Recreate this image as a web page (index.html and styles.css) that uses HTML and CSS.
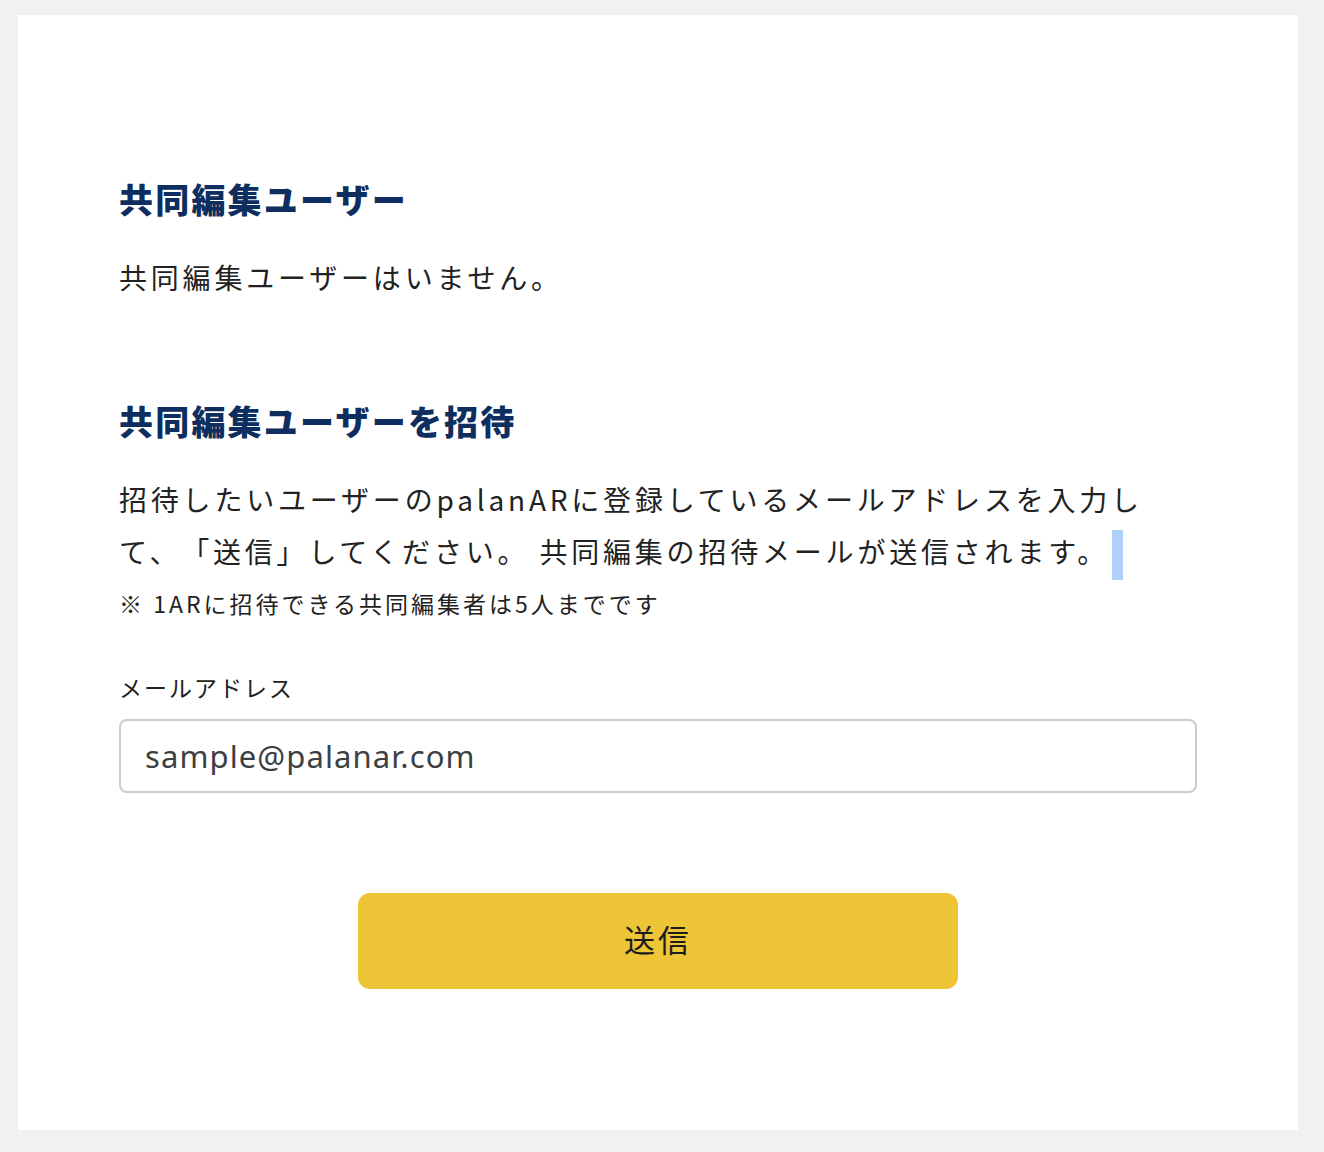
FILE: index.html
```html
<!DOCTYPE html>
<html lang="ja">
<head>
<meta charset="utf-8">
<title>共同編集ユーザー</title>
<link rel="stylesheet" href="styles.css">
</head>
<body>
<div class="page">
  <main class="card">
    <section class="block">
      <h2 class="title">共同編集ユーザー</h2>
      <p class="text">共同編集ユーザーはいません。</p>
    </section>
    <section class="block invite">
      <h2 class="title">共同編集ユーザーを招待</h2>
      <p class="text lead">招待したいユーザーのpalanARに登録しているメールアドレスを入力して、「送信」してください。 共同編集の招待メールが送信されます。<span class="sel"></span></p>
      <p class="note">※ 1ARに招待できる共同編集者は5人までです</p>
      <form class="form">
        <label class="label" for="email">メールアドレス</label>
        <input class="input" id="email" type="email" placeholder="sample@palanar.com">
        <div class="actions">
          <button class="btn" type="button">送信</button>
        </div>
      </form>
    </section>
  </main>
</div>
</body>
</html>
```
FILE: styles.css
```css
html, body {
  margin: 0;
  padding: 0;
  background: #f1f1f1;
}
body {
  font-family: "Noto Sans CJK JP", "Noto Sans", sans-serif;
  color: #222;
  text-spacing-trim: space-all;
}
.page {
  padding: 15px 26px 22px 18px;
}
.card {
  background: #fff;
  height: 1115px;
  box-sizing: border-box;
  padding: 160px 101px 0 101px;
}
.title {
  margin: 0;
  font-size: 34px;
  line-height: 48px;
  font-weight: 900;
  letter-spacing: 2.2px;
  color: #0d2e5e;
}
.text {
  margin: 29px 0 0;
  font-size: 28px;
  line-height: 50px;
  letter-spacing: 3.8px;
  color: #222;
}
.invite {
  margin-top: 95px;
}
.lead {
  margin-top: 28px;
  line-height: 52px;
}
.sel {
  display: inline-block;
  width: 11px;
  height: 50px;
  background: #aed0fb;
  vertical-align: middle;
  margin-left: 3px;
}
.note {
  margin: 7px 0 0;
  font-size: 23px;
  line-height: 33px;
  letter-spacing: 3px;
  color: #222;
}
.form {
  display: flex;
  flex-direction: column;
  margin-top: 51px;
}
.label {
  font-size: 23px;
  line-height: 33px;
  letter-spacing: 2px;
  color: #222;
}
.input {
  margin-top: 15px;
  height: 74px;
  box-sizing: border-box;
  border: 2px solid #c9cdd2;
  border-radius: 8px;
  padding: 0 24px;
  font-family: "Noto Sans", "Noto Sans CJK JP", sans-serif;
  font-size: 31px;
  letter-spacing: 1.1px;
  color: #3c4043;
  outline: none;
}
.input::placeholder {
  color: #3c4043;
  opacity: 1;
}
.actions {
  display: flex;
  justify-content: center;
  margin-top: 100px;
}
.btn {
  width: 600px;
  height: 96px;
  border: none;
  border-radius: 12px;
  background: #eec536;
  padding: 0 0 5px;
  font-family: "Noto Sans CJK JP", "Noto Sans", sans-serif;
  font-size: 31px;
  letter-spacing: 0.1em;
  color: #1d1d1d;
  cursor: pointer;
}
```
